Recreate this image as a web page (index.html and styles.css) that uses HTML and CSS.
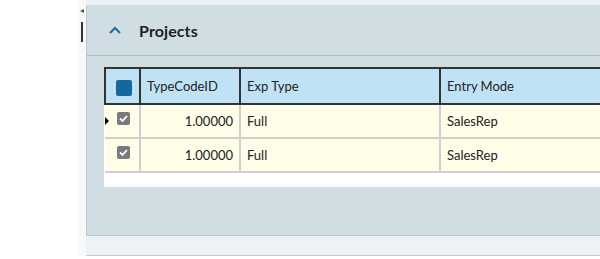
FILE: index.html
```html
<!DOCTYPE html>
<html lang="en">
<head>
  <meta charset="UTF-8">
  <meta name="viewport" content="width=device-width, initial-scale=1.0">
  <title>Projects</title>
  <link rel="stylesheet" href="styles.css">
</head>
<body>
    <div class="blank"></div>
    <div class="gutter">
        <span class="gutter-arrow"></span>
        <span class="gutter-bar"></span>
    </div>
    <div class="main">
        <div class="top-strip"></div>
        <section class="panel">
            <div class="panel-header">
                <svg class="chevron" width="12" height="8" viewBox="0 0 12 8"><path d="M1 7 L6 2 L11 7" fill="none" stroke="#1a6ea0" stroke-width="2"/></svg>
                <h2>Projects</h2>
            </div>
            <div class="panel-body">
                <div class="grid-wrap">
                    <table class="grid">
                        <colgroup>
                            <col class="w-check">
                            <col class="w-id">
                            <col class="w-type">
                            <col>
                        </colgroup>
                        <thead>
                            <tr>
                                <th class="col-check"><span class="head-check"></span></th>
                                <th>TypeCodeID</th>
                                <th>Exp Type</th>
                                <th>Entry Mode</th>
                            </tr>
                        </thead>
                        <tbody>
                            <tr>
                                <td class="col-check"><span class="row-marker"></span><span class="check"><svg width="13" height="13" viewBox="0 0 13 13"><path d="M3 6.5 L5.5 9 L10 4" fill="none" stroke="#fff" stroke-width="1.8"/></svg></span></td>
                                <td class="num">1.00000</td>
                                <td>Full</td>
                                <td>SalesRep</td>
                            </tr>
                            <tr>
                                <td class="col-check"><span class="check"><svg width="13" height="13" viewBox="0 0 13 13"><path d="M3 6.5 L5.5 9 L10 4" fill="none" stroke="#fff" stroke-width="1.8"/></svg></span></td>
                                <td class="num">1.00000</td>
                                <td>Full</td>
                                <td>SalesRep</td>
                            </tr>
                        </tbody>
                    </table>
                </div>
            </div>
        </section>
        <div class="bottom-strip"></div>
    </div>
</body>
</html>
```
FILE: styles.css
```css
body {
    font-family: Lato, "Open Sans", Arial, sans-serif;
    margin: 0;
    width: 600px;
    height: 259px;
    overflow: hidden;
    display: flex;
    background-color: white;
    color: #222;
}

.blank {
    width: 78px;
    flex: none;
}

.gutter {
    width: 8px;
    flex: none;
    height: 256px;
    background-color: #f8f8f8;
    display: flex;
    flex-direction: column;
    align-items: flex-start;
}
.gutter-arrow {
    margin: 9px 0 0 2px;
    width: 0;
    height: 0;
    border-top: 2.5px solid transparent;
    border-bottom: 2.5px solid transparent;
    border-right: 4px solid #555;
}
.gutter-bar {
    margin: 9px 0 0 3px;
    width: 2px;
    height: 20px;
    background-color: #333;
}

.main {
    flex: 1;
    display: flex;
    flex-direction: column;
}
.top-strip {
    height: 5px;
    background-color: #eef2f5;
}

.panel {
    height: 230px;
    background-color: #d0dde3;
    border-left: 1px solid #b8c8ce;
    border-bottom: 1px solid #b8c8ce;
}
.panel-header {
    height: 50px;
    display: flex;
    align-items: center;
    border-bottom: 1px solid #a7c3c8;
}
.chevron {
    margin: 0 0 0 22px;
}
.panel-header h2 {
    margin: 0 0 0 18px;
    font-size: 16px;
    font-weight: 700;
    color: #1f1f1f;
    letter-spacing: 0.1px;
}

.panel-body {
    padding: 11px 0 0 17px;
}
.grid-wrap {
    height: 120px;
    background-color: white;
}
.grid {
    border-collapse: collapse;
    table-layout: fixed;
    width: 100%;
    font-size: 13px;
}
.w-check {
    width: 35px;
}
.w-id {
    width: 100px;
}
.w-type {
    width: 200px;
}
.grid th {
    height: 34px;
    padding: 0 6px;
    background-color: #bfe3f5;
    border: 2px solid #333;
    border-right: none;
    text-align: left;
    font-weight: 400;
}
.grid td {
    height: 32px;
    padding: 0 6px;
    background-color: #fdfde8;
    border: 2px solid #cfcfcf;
    border-right-width: 0;
}
.grid tbody tr td:first-child {
    border-left: none;
}
.grid .col-check {
    padding: 0;
    text-align: center;
    position: relative;
}
.grid .num {
    text-align: right;
}

.head-check {
    display: inline-block;
    width: 16px;
    height: 16px;
    margin: 3px 0 0 3px;
    border-radius: 2px;
    background-color: #14679f;
    vertical-align: middle;
}
.check {
    display: inline-block;
    width: 13px;
    height: 13px;
    margin: -8px 0 0 3px;
    border-radius: 2px;
    background-color: #7a7a7a;
    vertical-align: middle;
    line-height: 0;
}
.row-marker {
    position: absolute;
    left: 0;
    top: 12px;
    width: 0;
    height: 0;
    border-top: 4px solid transparent;
    border-bottom: 4px solid transparent;
    border-left: 4px solid #000;
}

.bottom-strip {
    height: 19px;
    background-color: #eef2f5;
    border-bottom: 1px solid #c0ccd2;
}
```
